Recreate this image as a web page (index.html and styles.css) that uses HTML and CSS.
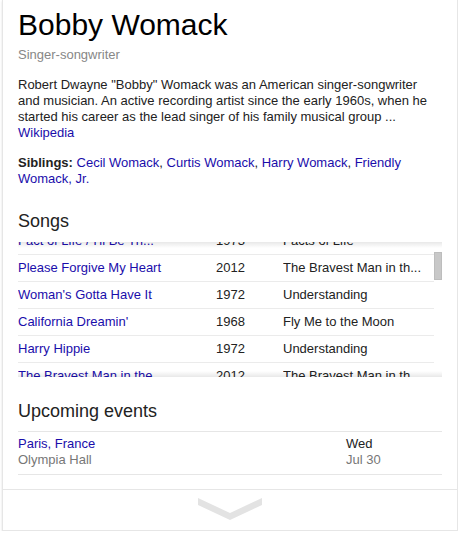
FILE: index.html
```html
<!DOCTYPE html>
<html>
<head>
<meta charset="utf-8">
<link rel="stylesheet" href="styles.css">
</head>
<body>
<div class="card">
  <div class="main">
    <h1 class="title">Bobby Womack</h1>
    <div class="subtitle">Singer-songwriter</div>
    <p class="desc">Robert Dwayne "Bobby" Womack was an American singer-songwriter and musician. An active recording artist since the early 1960s, when he started his career as the lead singer of his family musical group ... <a href="#">Wikipedia</a></p>
    <p class="facts"><b>Siblings:</b> <a href="#">Cecil Womack</a>, <a href="#">Curtis Womack</a>, <a href="#">Harry Womack</a>, <a href="#">Friendly Womack, Jr.</a></p>

    <h2 class="section">Songs</h2>
    <div class="scroll">
      <div class="list">
        <div class="row"><a class="c-song" href="#">Fact of Life / I'll Be Th...</a><span class="c-year">1973</span><span class="c-album">Facts of Life</span></div>
        <div class="row"><a class="c-song" href="#">Please Forgive My Heart</a><span class="c-year">2012</span><span class="c-album">The Bravest Man in th...</span></div>
        <div class="row"><a class="c-song" href="#">Woman's Gotta Have It</a><span class="c-year">1972</span><span class="c-album">Understanding</span></div>
        <div class="row"><a class="c-song" href="#">California Dreamin'</a><span class="c-year">1968</span><span class="c-album">Fly Me to the Moon</span></div>
        <div class="row"><a class="c-song" href="#">Harry Hippie</a><span class="c-year">1972</span><span class="c-album">Understanding</span></div>
        <div class="row"><a class="c-song" href="#">The Bravest Man in the ...</a><span class="c-year">2012</span><span class="c-album">The Bravest Man in th...</span></div>
        <div class="row"><a class="c-song" href="#">Across 110th Street</a><span class="c-year">1972</span><span class="c-album">Across 110th Street</span></div>
      </div>
      <div class="track"><div class="thumb"></div></div>
    </div>

    <h2 class="section events-title">Upcoming events</h2>
    <div class="event">
      <div class="ev-place"><a href="#">Paris, France</a><div class="muted">Olympia Hall</div></div>
      <div class="ev-date"><div>Wed</div><div class="muted">Jul 30</div></div>
    </div>
  </div>
  <div class="more">
    <svg width="64" height="22" viewBox="0 0 64 22"><polygon points="0,0 32,15 64,0 64,7 32,22 0,7" fill="#e3e3e3"/></svg>
  </div>
</div>
</body>
</html>
```

FILE: styles.css
```css
html, body {
  margin: 0;
  padding: 0;
  background: #fff;
}
body {
  font-family: "Liberation Sans", Arial, sans-serif;
  font-size: 13px;
  line-height: 16px;
  color: #222;
}
a {
  color: #1a0dab;
  text-decoration: none;
}
.card {
  box-sizing: border-box;
  width: 456px;
  margin-left: 2px;
  border: 1px solid #e6e6e6;
  border-top: none;
  box-shadow: 0 1px 2px rgba(0, 0, 0, 0.12);
  background: #fff;
}
.main {
  padding: 7px 15px 14px 15px;
}
.title {
  margin: 0;
  font-size: 30px;
  line-height: 36px;
  font-weight: normal;
  color: #000;
}
.subtitle {
  margin-top: 4px;
  color: #878787;
}
.desc {
  margin: 14px 0 0 0;
}
.facts {
  margin: 14px 0 0 0;
}
.facts b {
  color: #222;
}
.section {
  margin: 22px 0 0 0;
  font-size: 18px;
  line-height: 24px;
  font-weight: normal;
  color: #222;
}
.scroll {
  position: relative;
  display: flex;
  height: 135px;
  margin-top: 9px;
  overflow: hidden;
}
.scroll::before,
.scroll::after {
  content: "";
  position: absolute;
  left: 0;
  right: 0;
  height: 6px;
  pointer-events: none;
}
.scroll::before {
  top: 0;
  background: linear-gradient(rgba(0, 0, 0, 0.09), rgba(0, 0, 0, 0));
}
.scroll::after {
  bottom: 0;
  background: linear-gradient(rgba(0, 0, 0, 0), rgba(0, 0, 0, 0.09));
}
.list {
  flex: 1;
  margin-top: -14px;
}
.row {
  display: flex;
  align-items: center;
  height: 26px;
  border-bottom: 1px solid #ebebeb;
  white-space: nowrap;
}
.c-song {
  width: 198px;
  flex: none;
  overflow: hidden;
}
.c-year {
  width: 67px;
  flex: none;
}
.c-album {
  flex: 1;
  overflow: hidden;
}
.track {
  width: 8px;
  flex: none;
}
.thumb {
  box-sizing: border-box;
  margin-top: 10px;
  height: 28px;
  background: #c8c8c8;
  border: 1px solid #bdbdbd;
}
.events-title {
  margin-top: 22px;
}
.event {
  display: flex;
  margin-top: 8px;
  padding: 4px 0 6px 0;
  border-top: 1px solid #e6e6e6;
  border-bottom: 1px solid #e6e6e6;
}
.ev-place {
  flex: 1;
}
.ev-date {
  width: 96px;
  flex: none;
}
.muted {
  color: #777;
}
.more {
  display: flex;
  justify-content: center;
  align-items: flex-start;
  height: 41px;
  padding-top: 8px;
  box-sizing: border-box;
  border-top: 1px solid #e6e6e6;
}
.more svg {
  display: block;
}
```
